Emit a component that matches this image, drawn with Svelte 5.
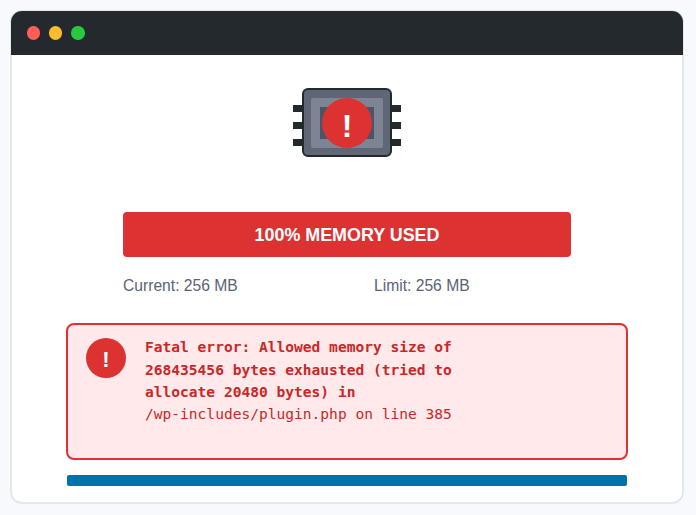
<script>
    const dots = ['#ff5f56', '#ffbd2e', '#27c93f'];
</script>

<div class="window">
    <div class="titlebar">
        {#each dots as color}
            <span class="dot" style="background: {color}"></span>
        {/each}
    </div>

    <div class="content">
        <div class="chip">
            <svg width="108" height="70" viewBox="0 0 108 70" aria-hidden="true">
                <g fill="#24292e">
                    <rect x="0" y="17" width="10" height="7" />
                    <rect x="0" y="34" width="10" height="7" />
                    <rect x="0" y="51" width="10" height="7" />
                    <rect x="98" y="17" width="10" height="7" />
                    <rect x="98" y="34" width="10" height="7" />
                    <rect x="98" y="51" width="10" height="7" />
                </g>
                <rect x="10" y="1" width="88" height="67" rx="5" fill="#5f6776" stroke="#24292e" stroke-width="2" />
                <rect x="18" y="10" width="72" height="50" rx="2" fill="#7d8494" />
                <rect x="27" y="19" width="54" height="32" fill="#4a5568" />
            </svg>
            <span class="chip-alert">!</span>
        </div>

        <div class="usage-bar">100% MEMORY USED</div>

        <div class="usage-stats">
            <span>Current: 256 MB</span>
            <span>Limit: 256 MB</span>
        </div>

        <div class="error-box">
            <span class="error-icon">!</span>
            <p class="error-text">
                <strong>Fatal error: Allowed memory size of<br />268435456 bytes exhausted (tried to<br />allocate 20480 bytes) in</strong><br />/wp-includes/plugin.php on line 385
            </p>
        </div>

        <div class="footer-bar"></div>
    </div>
</div>

<style>
    :global(body) {
        background: #f7f9fc;
        font-family: "Liberation Sans", Arial, sans-serif;
    }

    .window {
        box-sizing: border-box;
        width: 674px;
        height: 494px;
        margin: 10px 0 0 10px;
        padding-top: 1px;
        display: flex;
        flex-direction: column;
    }

    .titlebar {
        height: 44px;
        flex-shrink: 0;
        margin: 0 1px;
        background: #24292e;
        border-radius: 11px 11px 0 0;
        box-shadow: 0 0 0 1px #e2e8f0;
        display: flex;
        align-items: center;
        gap: 9px;
        padding-left: 15.7px;
        position: relative;
    }

    .dot {
        width: 13.4px;
        height: 13.4px;
        border-radius: 50%;
    }

    .content {
        flex: 1;
        box-sizing: border-box;
        background: #fff;
        border: 2px solid #e2e8f0;
        border-top: 0;
        border-radius: 0 0 12px 12px;
        display: flex;
        flex-direction: column;
        align-items: center;
        padding-top: 33px;
        position: relative;
    }

    .chip {
        position: relative;
        width: 108px;
        height: 70px;
    }

    .chip svg {
        display: block;
    }

    .chip-alert {
        position: absolute;
        left: 29px;
        top: 10px;
        width: 50px;
        height: 50px;
        border-radius: 50%;
        background: #dc3232;
        color: #fff;
        font-size: 32px;
        font-weight: 700;
        line-height: 56px;
        text-align: center;
    }

    .usage-bar {
        width: 448px;
        height: 45px;
        margin-top: 54px;
        background: #dc3232;
        border-radius: 4px;
        color: #fff;
        font-size: 17.9px;
        font-weight: 700;
        line-height: 47px;
        text-align: center;
    }

    .usage-stats {
        width: 448px;
        margin-top: 19px;
        display: grid;
        grid-template-columns: 251px 1fr;
        color: #5a6474;
        font-size: 15.65px;
        line-height: 20px;
    }

    .error-box {
        box-sizing: border-box;
        width: 562px;
        height: 137px;
        margin-top: 27px;
        background: #ffe9eb;
        border: 2px solid #dc3232;
        border-radius: 8px;
        padding: 11.4px 18px;
        display: flex;
        gap: 19px;
    }

    .error-icon {
        width: 40px;
        height: 40px;
        margin-top: 1.6px;
        flex-shrink: 0;
        border-radius: 50%;
        background: #dc3232;
        color: #fff;
        font-size: 22px;
        font-weight: 700;
        line-height: 44px;
        text-align: center;
    }

    .error-text {
        margin: 0;
        color: #c82828;
        font-family: "DejaVu Sans Mono", monospace;
        font-size: 14.57px;
        line-height: 22.3px;
    }

    .footer-bar {
        width: 560px;
        height: 11px;
        margin-top: 15px;
        background: #0073aa;
        border-radius: 2px;
    }
</style>
